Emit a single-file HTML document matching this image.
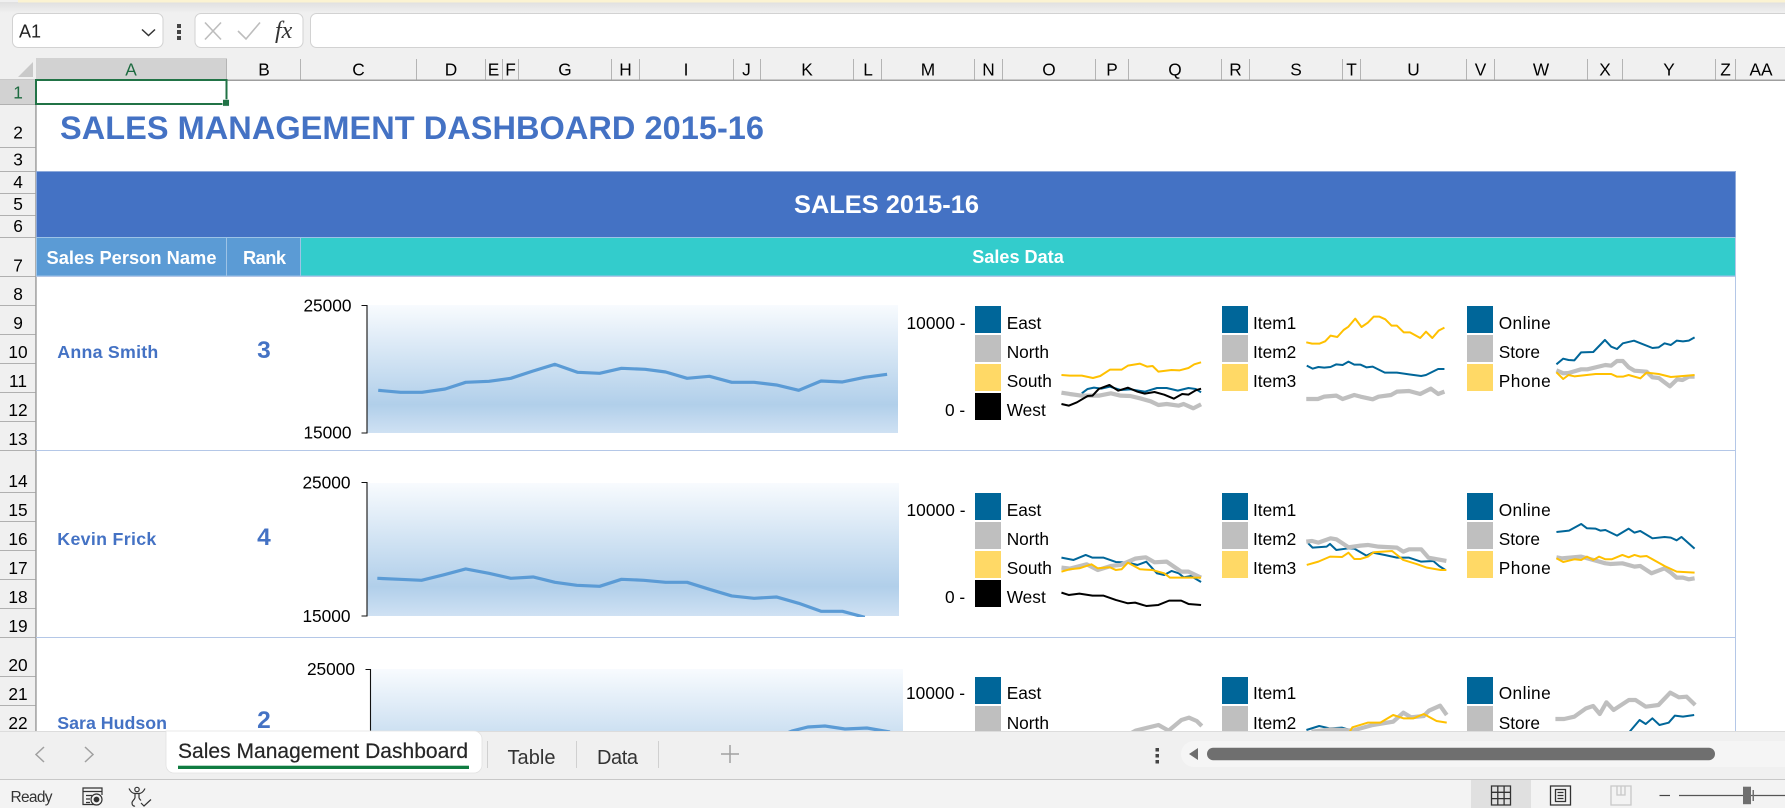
<!DOCTYPE html>
<html><head><meta charset="utf-8"><title>Sales Management Dashboard</title>
<style>
html,body{margin:0;padding:0;background:#fff;overflow:hidden;width:1785px;height:808px}
svg{display:block;font-family:"Liberation Sans",Arial,sans-serif}
text{fill:#000}
.h{font-size:17.3px;text-anchor:middle}
.l{font-size:17.3px}
.r{font-size:17.3px;text-anchor:end}
.b{fill:#4472c4;font-weight:700}
.w{fill:#fff;font-weight:700}
.sp polyline,.sp path{fill:none;vector-effect:non-scaling-stroke;stroke-linejoin:round}
.bl{stroke:#006699;stroke-width:2}
.gr{stroke:#bfbfbf;stroke-width:4.2}
.ye{stroke:#ffc000;stroke-width:2}
.bk{stroke:#000;stroke-width:2}
.ml{stroke:#5b9bd5;stroke-width:3.2}
</style></head><body>
<svg width="1785" height="808" viewBox="0 0 1785 808" xmlns="http://www.w3.org/2000/svg">
<defs>
<linearGradient id="pg" x1="0" y1="0" x2="0" y2="1"><stop offset="0" stop-color="#f8fbfe"/><stop offset=".78" stop-color="#b1cfea"/><stop offset="1" stop-color="#cfe1f3"/></linearGradient>
<linearGradient id="sh" x1="0" y1="0" x2="0" y2="1"><stop offset="0" stop-color="#e0e0e0"/><stop offset="1" stop-color="#f0f0f0"/></linearGradient>
<clipPath id="c2"><rect x="0" y="0" width="1785" height="617"/></clipPath>
</defs>

<!-- chrome background -->
<rect width="1785" height="80" fill="#f0f0f0"/>
<rect y="2" width="1785" height="11" fill="url(#sh)"/>
<rect x="18" y="0" width="1767" height="2.5" fill="#fbf3d2"/>
<rect x="12.5" y="13.5" width="150.5" height="34" rx="6" fill="#fff" stroke="#d2d2d2"/>
<text x="19" y="37.5" style="font-size:18px;fill:#222">A1</text>
<path d="M142 29.5l6.5 6 6.5-6" fill="none" stroke="#333" stroke-width="1.5"/>
<rect x="177" y="24" width="4" height="4" fill="#444"/><rect x="177" y="30" width="4" height="4" fill="#444"/><rect x="177" y="36" width="4" height="4" fill="#444"/>
<rect x="195" y="13.5" width="108" height="34" rx="6" fill="#fff" stroke="#d2d2d2"/>
<path d="M205 22.5l16 17M221 22.5l-16 17" fill="none" stroke="#bdbdbd" stroke-width="1.6"/>
<path d="M238 31l8 8 14-16.5" fill="none" stroke="#bdbdbd" stroke-width="1.6"/>
<text x="275" y="38" style="font:italic 24px 'Liberation Serif',serif;fill:#333">fx</text>
<rect x="310.5" y="13.5" width="1490" height="34" rx="6" fill="#fff" stroke="#d2d2d2"/>

<!-- column headers -->
<rect x="36" y="58" width="191" height="22" fill="#d2d2d2"/>
<path d="M33 62v15H18z" fill="#c9c9c9"/>
<g stroke="#b4b4b4" stroke-width="1"><path d="M226.5 59v21M300.5 59v21M416.5 59v21M485.5 59v21M502.5 59v21M518.5 59v21M611.5 59v21M639.5 59v21M733.5 59v21M760.5 59v21M853.5 59v21M881.5 59v21M974.5 59v21M1002.5 59v21M1095.5 59v21M1128.5 59v21M1221.5 59v21M1249.5 59v21M1342.5 59v21M1360.5 59v21M1466.5 59v21M1494.5 59v21M1587.5 59v21M1622.5 59v21M1715.5 59v21M1735.5 59v21"/></g>
<g>
<text class="h" x="131" y="75.5" style="fill:#1d6b40">A</text><text class="h" x="264" y="75.5">B</text><text class="h" x="358.500" y="75.5">C</text><text class="h" x="451" y="75.500">D</text><text class="h" x="493.500" y="75.500">E</text><text class="h" x="510.500" y="75.500">F</text><text class="h" x="565" y="75.500">G</text><text class="h" x="625.500" y="75.500">H</text><text class="h" x="686" y="75.500">I</text><text class="h" x="746.500" y="75.500">J</text><text class="h" x="807" y="75.500">K</text><text class="h" x="868" y="75.500">L</text><text class="h" x="928" y="75.500">M</text><text class="h" x="988.500" y="75.500">N</text><text class="h" x="1049" y="75.500">O</text><text class="h" x="1112" y="75.500">P</text><text class="h" x="1175" y="75.500">Q</text><text class="h" x="1235.500" y="75.500">R</text><text class="h" x="1296" y="75.500">S</text><text class="h" x="1351.500" y="75.500">T</text><text class="h" x="1413.500" y="75.500">U</text><text class="h" x="1480.500" y="75.500">V</text><text class="h" x="1541" y="75.500">W</text><text class="h" x="1605" y="75.500">X</text><text class="h" x="1669" y="75.500">Y</text><text class="h" x="1725.500" y="75.500">Z</text><text class="h" x="1761" y="75.500">AA</text>
</g>
<rect x="0" y="79.500" width="1785" height="1.5" fill="#9f9f9f"/>

<!-- row headers -->
<rect x="0" y="80" width="36" height="660" fill="#f0f0f0"/>
<rect x="0" y="80" width="36" height="24" fill="#d2d2d2"/>
<g stroke="#b0b0b0" stroke-width="1"><path d="M0 104.500h36M0 147.500h36M0 171.500h36M0 193.500h36M0 215.500h36M0 237.500h36M0 276.500h36M0 305.500h36M0 334.500h36M0 363.500h36M0 392.500h36M0 421.500h36M0 450.500h36M0 492.500h36M0 521.500h36M0 550.500h36M0 579.500h36M0 608.500h36M0 637.500h36M0 676.500h36M0 705.500h36"/></g>
<rect x="35.200" y="80" width="1.500" height="655" fill="#9f9f9f"/>
<g>
<text class="h" x="18" y="98.500" style="fill:#1d6b40">1</text><text class="h" x="18" y="138.500">2</text><text class="h" x="18" y="165.500">3</text><text class="h" x="18" y="188">4</text><text class="h" x="18" y="210">5</text><text class="h" x="18" y="232">6</text><text class="h" x="18" y="271.500">7</text><text class="h" x="18" y="300">8</text><text class="h" x="18" y="329">9</text><text class="h" x="18" y="358">10</text><text class="h" x="18" y="387">11</text><text class="h" x="18" y="416">12</text><text class="h" x="18" y="445">13</text><text class="h" x="18" y="487">14</text><text class="h" x="18" y="516">15</text><text class="h" x="18" y="545">16</text><text class="h" x="18" y="574">17</text><text class="h" x="18" y="603">18</text><text class="h" x="18" y="632">19</text><text class="h" x="18" y="671">20</text><text class="h" x="18" y="700">21</text><text class="h" x="18" y="729">22</text>
</g>

<!-- sheet -->
<text class="b" x="60" y="139" textLength="704" style="font-size:32.5px">SALES MANAGEMENT DASHBOARD 2015-16</text>
<rect x="36.500" y="171.500" width="1699" height="66" fill="#4472c4" stroke="#8eaadb"/>
<text class="w" x="886.500" y="213" text-anchor="middle" textLength="185" style="font-size:25.4px">SALES 2015-16</text>
<rect x="36.500" y="237.500" width="190" height="38.500" fill="#5b9bd5" stroke="#9dc3e6"/>
<rect x="226.500" y="237.500" width="74" height="38.500" fill="#5b9bd5" stroke="#9dc3e6"/>
<rect x="300.500" y="237.500" width="1435" height="38.500" fill="#33cccc" stroke="#9dc3e6"/>
<text class="w" x="46.500" y="264" textLength="170" style="font-size:18.300px">Sales Person Name</text>
<text class="w" x="264.500" y="264" text-anchor="middle" textLength="43" style="font-size:18.300px">Rank</text>
<text class="w" x="1018" y="263" text-anchor="middle" style="font-size:18.100px">Sales Data</text>
<path d="M36 276.500H1736M36 450.500H1736M36 637.500H1736M1735.500 237V731" fill="none" stroke="#b4c7e7" stroke-width="1"/>

<text class="b" x="57.300" y="358" textLength="101" style="font-size:17.800px">Anna Smith</text>
<text class="b" x="57.300" y="545" textLength="99" style="font-size:17.800px">Kevin Frick</text>
<text class="b" x="57.300" y="729" style="font-size:17.800px">Sara Hudson</text>
<text class="b" x="264" y="358" text-anchor="middle" style="font-size:24.500px">3</text>
<text class="b" x="264" y="545" text-anchor="middle" style="font-size:24.500px">4</text>
<text class="b" x="264" y="728" text-anchor="middle" style="font-size:24.500px">2</text>

<!-- big charts -->
<rect x="367" y="305" width="531" height="128" fill="url(#pg)"/>
<rect x="367" y="483" width="532" height="133" fill="url(#pg)"/>
<rect x="370.500" y="669" width="532.500" height="133" fill="url(#pg)"/>
<path d="M361.500 305.500h5.500v127.500h-5.500M361.500 482.500h5.500v133.500h-5.500M365.500 669.500h5V735" fill="none" stroke="#111" stroke-width="1.100"/>
<g class="r"><text class="r" x="351.500" y="311.500">25000</text><text class="r" x="351.500" y="438.500">15000</text><text class="r" x="350.500" y="488.500">25000</text><text class="r" x="350.500" y="622">15000</text><text class="r" x="355" y="675">25000</text></g>
<g class="sp" transform="translate(280,280) scale(.4464,.3333)">
<polyline class="ml" points="220,331 270,337 318,337 370,327 416,307 468,304 517,295 567,273 616,253 667,277 716,280 765,265 818,268 864,276 912,295 962,289 1012,307 1062,307 1112,315 1162,331 1212,303 1260,306 1310,292 1360,283"/>
</g>
<g clip-path="url(#c2)"><g class="sp" transform="translate(280,280) scale(.4464,.3333)">
<polyline class="ml" points="218,895 268,898 317,901 368,884 416,867 468,880 517,895 567,891 616,907 665,916 716,919 765,898 815,901 864,907 912,907 962,928 1012,948 1062,955 1112,951 1162,970 1212,994 1260,994 1310,1012"/>
</g></g>
<polyline class="ml" points="780,736 792,731 808,727 825,726 845,729 867,728 890,732" fill="none" stroke="#5b9bd5" stroke-width="3.200"/>

<!-- legends row 1 -->
<g id="lg">
<text class="l" x="906.500" y="329" textLength="59">10000 -</text><text class="l" x="945" y="416">0 -</text>
<rect x="975" y="306" width="26" height="27" fill="#006699"/><rect x="975" y="335" width="26" height="27" fill="#bfbfbf"/><rect x="975" y="364" width="26" height="27" fill="#ffd966"/><rect x="975" y="393" width="26" height="27" fill="#000"/>
<text class="l" x="1006.700" y="329">East</text><text class="l" x="1006.700" y="358">North</text><text class="l" x="1006.700" y="387">South</text><text class="l" x="1006.700" y="416">West</text>
<rect x="1222" y="306" width="26" height="27" fill="#006699"/><rect x="1222" y="335" width="26" height="27" fill="#bfbfbf"/><rect x="1222" y="364" width="26" height="27" fill="#ffd966"/>
<text class="l" x="1253" y="329">Item1</text><text class="l" x="1253" y="358">Item2</text><text class="l" x="1253" y="387">Item3</text>
<rect x="1467" y="306" width="26" height="27" fill="#006699"/><rect x="1467" y="335" width="26" height="27" fill="#bfbfbf"/><rect x="1467" y="364" width="26" height="27" fill="#ffd966"/>
<text class="l" x="1498.700" y="329" textLength="52">Online</text><text class="l" x="1498.700" y="358">Store</text><text class="l" x="1498.700" y="387" textLength="52">Phone</text>
</g>
<!-- legends row 2 -->
<g>
<text class="l" x="906.500" y="516" textLength="59">10000 -</text><text class="l" x="945" y="603">0 -</text>
<rect x="975" y="493" width="26" height="27" fill="#006699"/><rect x="975" y="522" width="26" height="27" fill="#bfbfbf"/><rect x="975" y="551" width="26" height="27" fill="#ffd966"/><rect x="975" y="580" width="26" height="27" fill="#000"/>
<text class="l" x="1006.700" y="516">East</text><text class="l" x="1006.700" y="545">North</text><text class="l" x="1006.700" y="574">South</text><text class="l" x="1006.700" y="603">West</text>
<rect x="1222" y="493" width="26" height="27" fill="#006699"/><rect x="1222" y="522" width="26" height="27" fill="#bfbfbf"/><rect x="1222" y="551" width="26" height="27" fill="#ffd966"/>
<text class="l" x="1253" y="516">Item1</text><text class="l" x="1253" y="545">Item2</text><text class="l" x="1253" y="574">Item3</text>
<rect x="1467" y="493" width="26" height="27" fill="#006699"/><rect x="1467" y="522" width="26" height="27" fill="#bfbfbf"/><rect x="1467" y="551" width="26" height="27" fill="#ffd966"/>
<text class="l" x="1498.700" y="516" textLength="52">Online</text><text class="l" x="1498.700" y="545">Store</text><text class="l" x="1498.700" y="574" textLength="52">Phone</text>
</g>
<!-- legends row 3 -->
<g>
<text class="l" x="906" y="699" textLength="59">10000 -</text>
<rect x="975" y="677" width="26" height="27" fill="#006699"/><rect x="975" y="706" width="26" height="27" fill="#bfbfbf"/>
<text class="l" x="1006.700" y="699">East</text><text class="l" x="1006.700" y="729">North</text>
<rect x="1222" y="677" width="26" height="27" fill="#006699"/><rect x="1222" y="706" width="26" height="27" fill="#bfbfbf"/>
<text class="l" x="1253" y="699">Item1</text><text class="l" x="1253" y="729">Item2</text>
<rect x="1467" y="677" width="26" height="27" fill="#006699"/><rect x="1467" y="706" width="26" height="27" fill="#bfbfbf"/>
<text class="l" x="1498.700" y="699" textLength="52">Online</text><text class="l" x="1498.700" y="729">Store</text>
</g>

<!-- sparklines rows 1-2 -->
<g class="sp" transform="translate(980,280) scale(.4848,.3333)">
<polyline class="ye" points="168,285 185,287 210,287 233,294 248,288 268,269 292,269 305,257 330,251 345,260 356,258 368,275 395,270 412,271 430,264 442,253 456,247"/>
<polyline class="bl" points="210,340 222,327 235,323 250,326 268,320 290,330 310,328 340,335 365,324 385,324 408,332 430,324 445,327 456,337"/>
<polyline class="gr" points="168,338 185,342 210,347 225,347 245,347 270,340 290,347 310,348 330,355 352,364 368,375 385,372 410,377 420,372 440,385 456,373"/>
<polyline class="bk" points="168,372 183,377 200,367 222,348 232,347 245,327 267,315 285,332 305,323 325,335 340,341 360,336 380,344 400,356 417,342 430,344 445,331 456,326"/>
<polyline class="ye" points="673,187 685,191 700,191 712,184 723,167 737,171 750,150 760,140 774,116 787,141 800,128 812,110 824,110 836,118 849,137 860,137 874,157 887,157 908,174 920,155 933,174 946,152 958,143"/>
<polyline class="bl" points="674,257 686,266 698,261 710,263 723,261 735,253 748,255 760,245 772,254 785,254 797,262 810,260 835,278 860,278 885,283 910,288 920,285 945,267 958,267"/>
<polyline class="gr" points="673,357 697,357 710,350 735,347 748,357 772,345 785,350 810,358 822,350 848,345 860,335 885,333 908,342 930,326 945,342 958,335"/>
<polyline class="bl" points="1189,253 1203,236 1214,240 1226,241 1240,217 1265,216 1289,180 1302,200 1314,207 1326,190 1349,182 1387,204 1400,202 1412,190 1425,195 1437,182 1450,184 1462,182 1474,172"/>
<polyline class="gr" points="1189,271 1203,280 1214,279 1240,268 1253,268 1290,255 1302,257 1314,243 1326,243 1338,262 1350,272 1375,275 1387,292 1400,294 1423,319 1438,298 1449,300 1462,290 1474,290"/>
<polyline class="ye" points="1189,277 1203,297 1214,285 1226,289 1270,282 1302,282 1314,290 1326,290 1338,285 1362,295 1375,278 1400,282 1425,291 1450,288 1474,285"/>

<polyline class="bl" points="168,833 193,840 218,825 232,833 255,833 280,846 305,848 325,855 343,845 365,880 380,885 395,873 410,880 420,892 435,888 456,906"/>
<polyline class="gr" points="168,863 185,866 220,853 243,870 270,858 290,855 320,836 342,832 360,847 385,845 415,875 430,875 456,893"/>
<polyline class="ye" points="168,875 185,868 205,865 230,853 243,865 268,862 280,870 292,868 305,848 330,868 355,870 380,880 392,893 430,893 456,893"/>
<polyline class="bk" points="168,938 183,945 205,941 232,947 255,947 280,960 305,970 320,968 343,978 368,975 390,962 415,962 430,972 456,975"/>
<polyline class="bl" points="677,790 686,803 715,800 722,792 735,810 760,805 772,806 797,827 810,818 835,825 860,833 885,833 910,845 935,843 947,858 960,870"/>
<polyline class="gr" points="673,785 685,783 698,788 723,775 735,778 760,802 785,797 800,795 822,800 860,803 873,815 885,808 910,808 925,833 962,843"/>
<polyline class="ye" points="674,855 698,845 722,830 747,831 760,818 772,837 785,837 800,830 812,817 850,813 873,840 900,852 922,863 950,870 962,870"/>
<polyline class="bl" points="1189,756 1215,752 1240,732 1252,745 1270,746 1280,752 1290,750 1314,767 1338,746 1350,758 1362,753 1387,775 1412,771 1425,773 1437,781 1447,771 1474,806"/>
<polyline class="gr" points="1189,832 1200,835 1240,830 1290,850 1300,852 1325,850 1350,860 1362,858 1385,880 1412,865 1425,878 1437,893 1450,893 1462,898 1474,895"/>
<polyline class="ye" points="1189,835 1203,846 1226,838 1240,840 1252,830 1265,840 1277,830 1290,838 1303,838 1325,825 1338,832 1350,825 1362,830 1375,828 1412,858 1437,875 1474,878"/>
</g>
<!-- sparklines row 3 -->
<g class="sp" transform="translate(985,640) scale(.5102,.3333)">
<polyline class="gr" points="280,285 295,272 340,255 360,272 385,240 400,233 415,243 425,258"/>
<polyline class="bl" points="630,270 655,258 675,265 700,263 720,272"/>
<polyline class="gr" points="640,275 680,268 720,272 760,255 800,245 820,218 835,232 860,228 870,212 892,197 905,225"/>
<polyline class="ye" points="715,275 720,262 750,248 775,248 800,225 820,235 840,235 860,222 885,243 905,248"/>
<polyline class="gr" points="1118,237 1135,237 1155,230 1178,205 1192,198 1205,222 1218,187 1232,210 1262,180 1275,180 1295,200 1320,195 1343,158 1360,172 1375,170 1392,195"/>
<polyline class="bl" points="1262,278 1283,240 1295,252 1308,235 1322,255 1340,248 1352,227 1368,230 1390,225"/>
</g>

<!-- sheet tabs -->
<rect x="0" y="731" width="1785" height="49" fill="#f0f0f0"/>
<path d="M0 731.500H1785" stroke="#dcdcdc" stroke-width="1"/>
<path d="M166 731h308a8 8 0 0 1 8 8v26a8 8 0 0 1-8 8H174a8 8 0 0 1-8-8z" fill="#fff" stroke="#e2e2e2" stroke-width=".8"/>
<rect x="178" y="765.700" width="291" height="3.300" fill="#107c41"/>
<text x="178" y="758" textLength="290" style="font-size:21px;fill:#262626;stroke:#262626;stroke-width:.2">Sales Management Dashboard</text>
<path d="M44 747l-8 7.500 8 7.500M85 747l8 7.500-8 7.500" fill="none" stroke="#a0a0a0" stroke-width="1.500"/>
<path d="M487.500 741v27M576.500 741v27M658.500 741v27" stroke="#d0d0d0" stroke-width="1"/>
<text x="507.500" y="764" textLength="48" style="font-size:20px;fill:#333">Table</text>
<text x="597" y="764" textLength="41" style="font-size:20px;fill:#333">Data</text>
<path d="M730 745v18M721 754h18" stroke="#a0a0a0" stroke-width="1.500"/>
<rect x="1155.500" y="748" width="3.500" height="3.500" fill="#444"/><rect x="1155.500" y="754" width="3.500" height="3.500" fill="#444"/><rect x="1155.500" y="760" width="3.500" height="3.500" fill="#444"/>
<path d="M1194 741H1785V767H1194a13 13 0 0 1 0-26z" fill="#f5f5f5"/>
<path d="M1198 748v12l-9-6z" fill="#6e6e6e"/>
<rect x="1207" y="747.700" width="508" height="12.500" rx="6.200" fill="#6f6f6f"/>

<!-- status bar -->
<rect x="0" y="779" width="1785" height="29" fill="#f3f3f3"/>
<path d="M0 779.500H1785" stroke="#c8c8c8" stroke-width="1"/>
<text x="10.500" y="802" textLength="42" style="font-size:15.500px;fill:#333">Ready</text>
<g fill="none" stroke="#333" stroke-width="1.200">
<path d="M99 804.500H83V788h19v7M83 791.500h19M86 795.500h6M86 799h4M86 802.500h4"/>
<circle cx="96.500" cy="799.500" r="5.500" fill="#f3f3f3"/><circle cx="96.500" cy="799.500" r="2.300" fill="#333"/>
<circle cx="137" cy="789.500" r="2.200"/>
<path d="M129 788.500c2 4 4 5 6 5h4c2 0 4-1 6-5M135 793.500v4c0 2-3 3-3 5.500s2 3.500 3 3M139 793.500v4c0 1 1 2 2 3"/>
<path d="M141 803l3 3 7-6.500"/>
</g>
<rect x="1471" y="780" width="60" height="28" fill="#e0e0e0"/>
<g fill="none" stroke="#333" stroke-width="1.300">
<path d="M1491.500 786h19v19h-19zM1491.500 792.300h19M1491.500 798.600h19M1497.800 786v19M1504.100 786v19"/>
<path d="M1550.500 786h20v19h-20zM1555.500 789.500h10v12h-10zM1557.500 792.500h6M1557.500 795.500h6M1557.500 798.500h6"/>
</g>
<path d="M1611 786h20v19h-20zM1617 786v9h8v-9M1621 786v9" fill="none" stroke="#c8c8c8" stroke-width="1.300"/>
<path d="M1659.500 795.500h10.500" stroke="#444" stroke-width="1.200"/>
<path d="M1679 795.500H1785" stroke="#555" stroke-width="1.300"/>
<rect x="1743" y="786.700" width="8" height="17.500" fill="#6f6f6f"/>
<rect x="1752.500" y="790" width="1.500" height="11" fill="#6f6f6f"/>

<!-- selection -->
<rect x="36" y="80" width="190.500" height="24" fill="none" stroke="#217346" stroke-width="2"/>
<rect x="222.700" y="99.500" width="6.600" height="6.600" fill="#217346" stroke="#fff" stroke-width=".5"/>
</svg>
</body></html>
